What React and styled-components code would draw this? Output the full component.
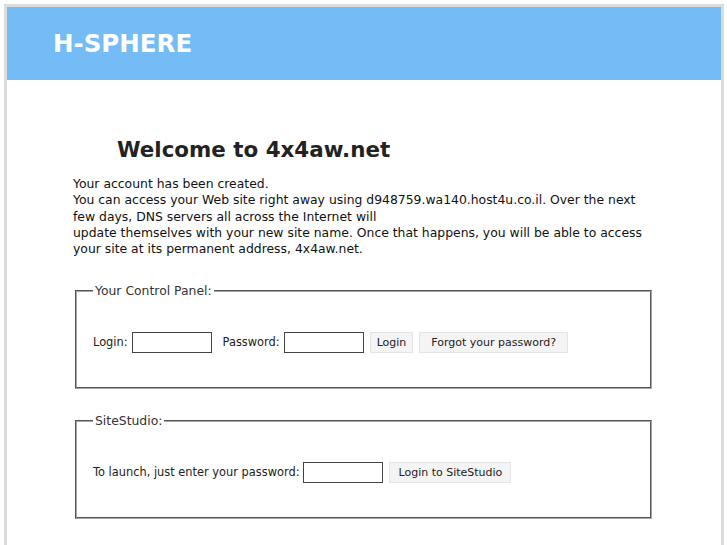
import React from "react";
import styled, { createGlobalStyle } from "styled-components";

const Global = createGlobalStyle`
  html, body { margin: 0; padding: 0; background: #ffffff; }
  body { font-family: "DejaVu Sans", Verdana, sans-serif; color: #222; }
`;

const Frame = styled.div`
  margin: 4px 3px 0 4px;
  border: 3px solid #dcdcdc;
  border-bottom: none;
  min-height: 560px;
  background: #fff;
`;

const Header = styled.header`
  height: 73px;
  background: #74bcf6;
  display: flex;
  align-items: center;
  padding-left: 46px;
`;

const Logo = styled.div`
  color: #ffffff;
  font-weight: bold;
  font-size: 24.5px;
`;

const Content = styled.main`
  padding: 58px 0 0 65px;
  width: 580px;
`;

const Title = styled.h1`
  margin: 0 0 14px 45px;
  font-size: 21.4px;
  font-weight: bold;
  color: #222;
  line-height: 24px;
`;

const Intro = styled.p`
  margin: 0 0 26px 1px;
  font-size: 12.4px;
  line-height: 16.3px;
  color: #111;
`;

const Panel = styled.fieldset`
  margin: 0 0 24px 3px;
  padding: 33px 16px 34px;
  border: 2px groove #a8a8a8;
  min-width: 0;
`;

const Legend = styled.legend`
  padding: 0 2px;
  font-size: 12.4px;
  color: #333;
`;

const Row = styled.div`
  display: flex;
  align-items: center;
  height: 22px;
  font-size: 11.4px;
  color: #222;
`;

const Label = styled.span`
  margin-right: 4px;
`;

const Field = styled.input`
  box-sizing: border-box;
  width: 80px;
  height: 21px;
  border: 1px solid #444;
  background: #fff;
  margin: 0 ${(p) => p.$gap || 0}px 0 0;
  padding: 0 2px;
  font: inherit;
`;

const Button = styled.button`
  box-sizing: border-box;
  height: 21px;
  margin-right: 6px;
  padding: 0 ${(p) => p.$pad || 6}px;
  background: #f4f4f4;
  border: 1px solid #e4e4e4;
  font-family: "DejaVu Sans", Verdana, sans-serif;
  font-size: 11px;
  color: #222;
`;

export default function App() {
  return (
    <>
      <Global />
      <Frame>
        <Header>
          <Logo>H-SPHERE</Logo>
        </Header>
        <Content>
          <Title>Welcome to 4x4aw.net</Title>
          <Intro>
            Your account has been created.
            <br />
            You can access your Web site right away using d948759.wa140.host4u.co.il. Over the next
            <br />
            few days, DNS servers all across the Internet will
            <br />
            update themselves with your new site name. Once that happens, you will be able to access
            <br />
            your site at its permanent address, 4x4aw.net.
          </Intro>
          <Panel>
            <Legend>Your Control Panel:</Legend>
            <Row>
              <Label>Login:</Label>
              <Field type="text" $gap={11} />
              <Label>Password:</Label>
              <Field type="password" $gap={6} />
              <Button>Login</Button>
              <Button $pad={11}>Forgot your password?</Button>
            </Row>
          </Panel>
          <Panel>
            <Legend>SiteStudio:</Legend>
            <Row>
              <Label>To launch, just enter your password:</Label>
              <Field type="password" $gap={6} />
              <Button $pad={8}>Login to SiteStudio</Button>
            </Row>
          </Panel>
        </Content>
      </Frame>
    </>
  );
}
